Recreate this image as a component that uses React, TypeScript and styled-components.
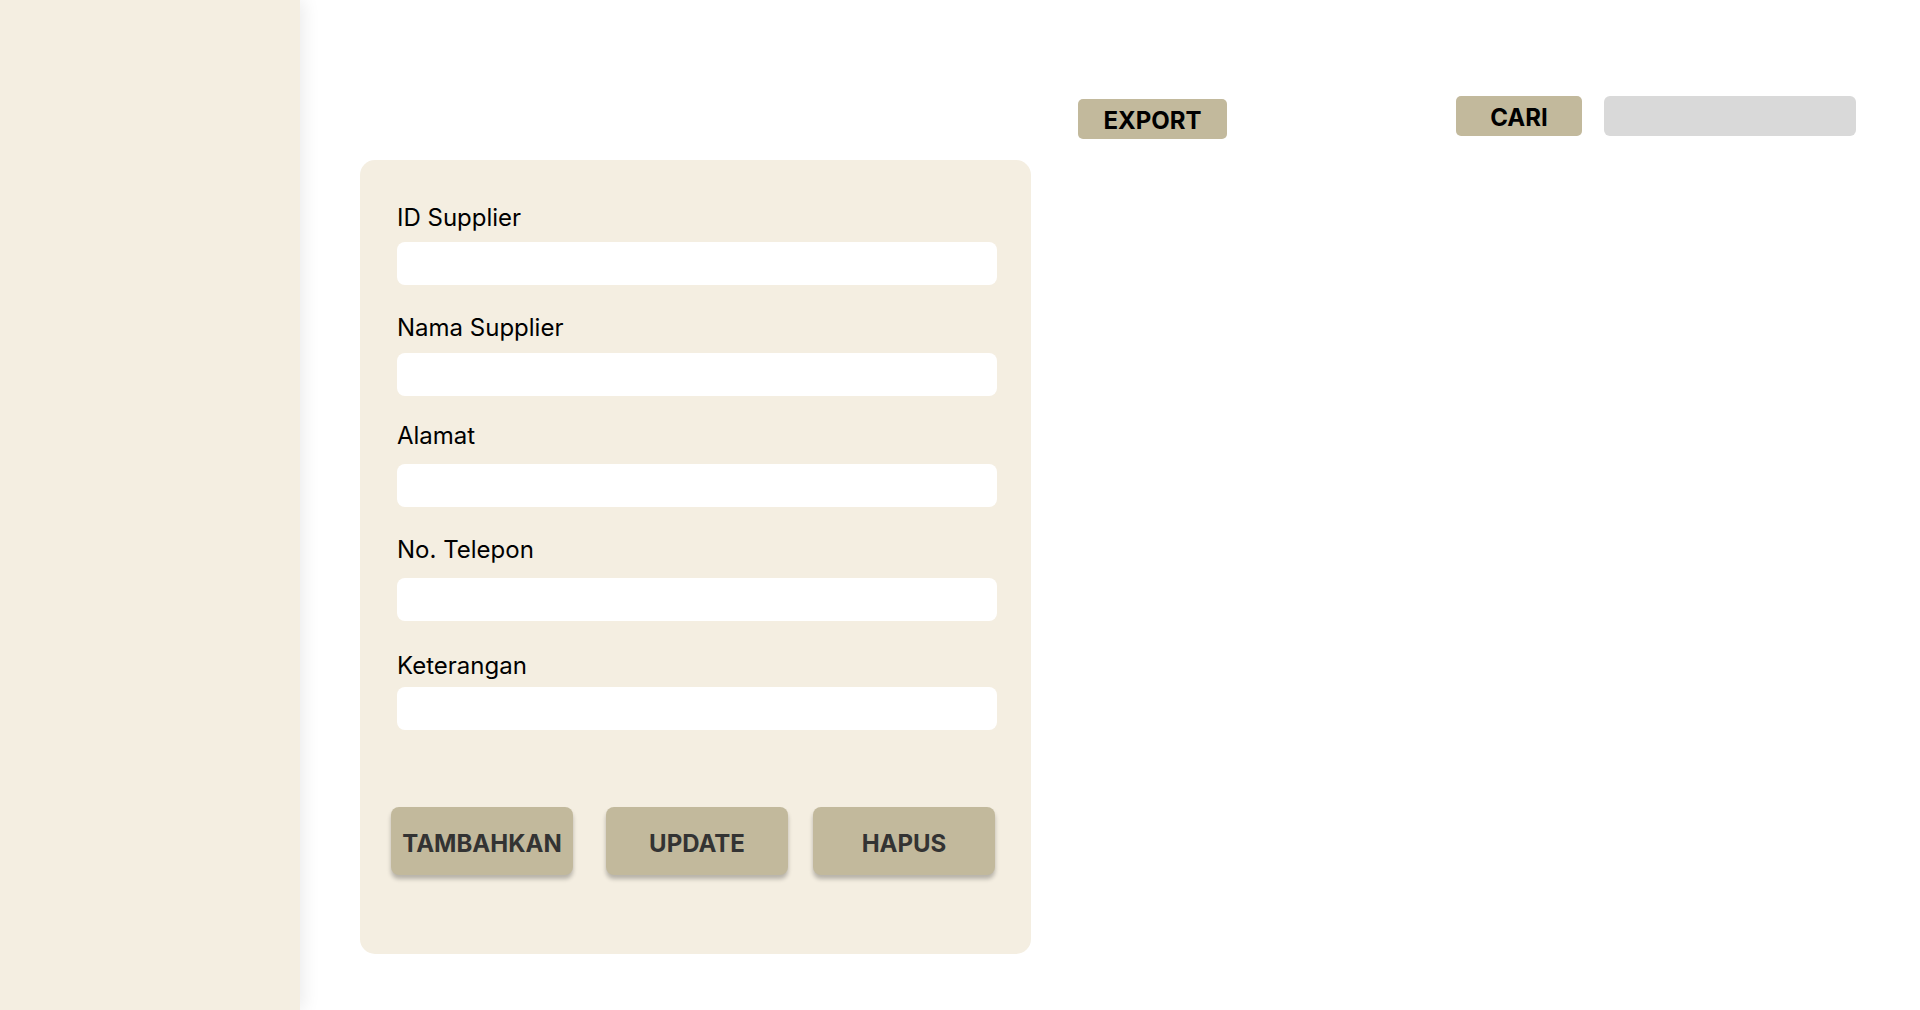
import React from "react";
import styled, { createGlobalStyle } from "styled-components";

const GlobalStyle = createGlobalStyle`
  html, body {
    margin: 0;
    padding: 0;
    background: #ffffff;
  }
  body {
    font-family: Inter, "Noto Sans", "Liberation Sans", sans-serif;
  }
  * { box-sizing: border-box; }
`;

const Page = styled.div`
  display: flex;
  min-height: 100vh;
  height: 1010px;
  background: #ffffff;
  overflow: hidden;
`;

const Sidebar = styled.aside`
  flex: 0 0 300px;
  width: 300px;
  background: #f4eee1;
  box-shadow: 4px 0 16px rgba(0, 0, 0, 0.08);
  position: relative;
  z-index: 1;
`;

const Main = styled.main`
  flex: 1;
  display: flex;
  flex-direction: column;
  padding-top: 96px;
`;

const Toolbar = styled.div`
  display: flex;
  justify-content: flex-end;
  align-items: flex-start;
  height: 40px;
  padding-right: 64px;
`;

const ToolButton = styled.button<{ $width: number; $top?: number; $mr?: number }>`
  width: ${(p) => p.$width}px;
  height: 40px;
  margin-top: ${(p) => p.$top ?? 0}px;
  margin-right: ${(p) => p.$mr ?? 0}px;
  border: none;
  border-radius: 5px;
  background: #c2b99c;
  color: #000000;
  font-family: Inter, "Noto Sans", "Liberation Sans", sans-serif;
  font-weight: 700;
  font-size: 24px;
  line-height: 29px;
  padding: 2px 0 0;
  cursor: pointer;
`;

const SearchBox = styled.input`
  width: 252px;
  height: 40px;
  border: none;
  border-radius: 6px;
  background: #d9d9d9;
  outline: none;
  padding: 0 12px;
  font-family: Inter, "Noto Sans", "Liberation Sans", sans-serif;
  font-size: 18px;
`;

const Card = styled.section`
  margin-top: 24px;
  margin-left: 60px;
  width: 671px;
  height: 794px;
  background: #f4eee1;
  border-radius: 15px;
  padding: 43px 34px 0 37px;
  display: flex;
  flex-direction: column;
`;

const Field = styled.div<{ $top: number; $gap: number }>`
  display: flex;
  flex-direction: column;
  margin-top: ${(p) => p.$top}px;
  gap: ${(p) => p.$gap}px;
`;

const Label = styled.label`
  font-family: Inter, "Noto Sans", "Liberation Sans", sans-serif;
  font-size: 24px;
  line-height: 29px;
  font-weight: 400;
  color: #000000;
`;

const TextInput = styled.input`
  width: 600px;
  height: 43px;
  border: none;
  border-radius: 8px;
  background: #ffffff;
  outline: none;
  padding: 0 14px;
  font-family: Inter, "Noto Sans", "Liberation Sans", sans-serif;
  font-size: 18px;
`;

const ButtonRow = styled.div`
  display: flex;
  margin-top: 77px;
  margin-left: -6px;
`;

const ActionButton = styled.button<{ $ml: number }>`
  width: 182px;
  height: 68px;
  margin-left: ${(p) => p.$ml}px;
  border: none;
  border-radius: 8px;
  background: #c2b99c;
  color: #333333;
  box-shadow: 0 4px 4px rgba(0, 0, 0, 0.25);
  font-family: Inter, "Noto Sans", "Liberation Sans", sans-serif;
  font-weight: 700;
  font-size: 24px;
  line-height: 29px;
  padding: 5px 0 0;
  cursor: pointer;
`;

const fields = [
  { label: "ID Supplier", top: 0, gap: 10 },
  { label: "Nama Supplier", top: 28, gap: 11 },
  { label: "Alamat", top: 25, gap: 14 },
  { label: "No. Telepon", top: 28, gap: 14 },
  { label: "Keterangan", top: 30, gap: 7 },
];

const actions = [
  { label: "TAMBAHKAN", ml: 0 },
  { label: "UPDATE", ml: 33 },
  { label: "HAPUS", ml: 25 },
];

export default function App() {
  return (
    <>
      <GlobalStyle />
      <Page>
        <Sidebar />
        <Main>
          <Toolbar>
            <ToolButton $width={149} $top={3} $mr={229}>
              EXPORT
            </ToolButton>
            <ToolButton $width={126} $mr={22}>
              CARI
            </ToolButton>
            <SearchBox />
          </Toolbar>
          <Card>
            {fields.map((f) => (
              <Field key={f.label} $top={f.top} $gap={f.gap}>
                <Label>{f.label}</Label>
                <TextInput />
              </Field>
            ))}
            <ButtonRow>
              {actions.map((a) => (
                <ActionButton key={a.label} $ml={a.ml}>
                  {a.label}
                </ActionButton>
              ))}
            </ButtonRow>
          </Card>
        </Main>
      </Page>
    </>
  );
}
